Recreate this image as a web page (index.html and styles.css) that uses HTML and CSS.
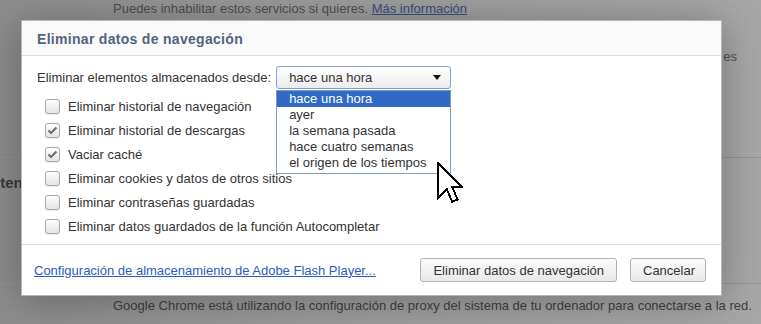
FILE: index.html
```html
<!DOCTYPE html>
<html lang="es">
<head>
  <meta charset="UTF-8" />
  <meta name="viewport" content="width=device-width, initial-scale=1.0" />
  <title>Eliminar datos de navegación</title>
  <link rel="stylesheet" href="styles.css">
</head>
<body>
  <div class="page">
    <p class="page-note">Puedes inhabilitar estos servicios si quieres. <a href="#">Más información</a></p>
    <p class="page-tail">es</p>
    <section class="page-section">
      <h3 class="page-heading">Contenido web</h3>
    </section>
    <section class="page-section page-section-last">
      <p class="page-proxy">Google Chrome está utilizando la configuración de proxy del sistema de tu ordenador para conectarse a la red.</p>
    </section>
  </div>

  <div class="dialog">
    <div class="dialog-header">
      <h2>Eliminar datos de navegación</h2>
    </div>

    <div class="dialog-body">
      <div class="since-row">
        <span class="since-label">Eliminar elementos almacenados desde:</span>
        <div class="select-wrap">
          <div class="select">
            <span>hace una hora</span>
            <span class="select-arrow"></span>
          </div>
          <ul class="listbox">
            <li class="selected">hace una hora</li>
            <li>ayer</li>
            <li>la semana pasada</li>
            <li>hace cuatro semanas</li>
            <li>el origen de los tiempos</li>
          </ul>
          <svg class="cursor" width="26" height="43" viewBox="0 0 12 20" shape-rendering="crispEdges">
            <path d="M0.5 0.5 V16.5 L4.5 12.5 L7 18.5 L9.5 17.5 L7 11.5 H11.5 Z" fill="#fff" stroke="#000" stroke-width="0.9" stroke-linejoin="miter"/>
          </svg>
        </div>
      </div>

      <div class="options">
        <label class="option"><span class="box"></span>Eliminar historial de navegación</label>
        <label class="option"><span class="box checked"><svg width="11" height="9" viewBox="0 0 11 9"><path d="M1.5 4.5 L4 7 L9.5 1.5" fill="none" stroke="#707070" stroke-width="2.2"/></svg></span>Eliminar historial de descargas</label>
        <label class="option"><span class="box checked"><svg width="11" height="9" viewBox="0 0 11 9"><path d="M1.5 4.5 L4 7 L9.5 1.5" fill="none" stroke="#707070" stroke-width="2.2"/></svg></span>Vaciar caché</label>
        <label class="option"><span class="box"></span>Eliminar cookies y datos de otros sitios</label>
        <label class="option"><span class="box"></span>Eliminar contraseñas guardadas</label>
        <label class="option"><span class="box"></span>Eliminar datos guardados de la función Autocompletar</label>
      </div>
    </div>

    <div class="dialog-footer">
      <a href="#" class="flash-link">Configuración de almacenamiento de Adobe Flash Player...</a>
      <div class="buttons">
        <button type="button">Eliminar datos de navegación</button>
        <button type="button">Cancelar</button>
      </div>
    </div>
  </div>
</body>
</html>
```

FILE: styles.css
```css
body {
  margin: 0;
  width: 761px;
  height: 324px;
  overflow: hidden;
  font-family: 'Liberation Sans', Arial, sans-serif;
  font-size: 13px;
  color: #333;
  background: linear-gradient(90deg, #8c8c8c 0%, #9c9c9c 40%, #a7a7a7 100%);
  position: relative;
}

.page {
  height: 324px;
}

.page-note {
  margin: 0;
  padding: 1px 0 0 113px;
  line-height: 16px;
  color: #4e4e4e;
}

.page-note a {
  color: #3b4d7a;
}

.page-tail {
  margin: 0;
  padding: 32px 24px 9px 0;
  text-align: right;
  line-height: 16px;
  color: #4e4e4e;
}

.page-section {
  border-top: 1px solid #929292;
  margin-top: 83px;
  height: 125px;
}

.page-heading {
  margin: 16px 0 0 -29px;
  font-size: 15px;
  line-height: 18px;
  color: #3a3a3a;
}

.page-section-last {
  margin-top: 0;
  height: auto;
}

.page-proxy {
  margin: 0;
  padding: 14px 0 0 113px;
  line-height: 16px;
  color: #3f3f3f;
}

/* dialogo */

.dialog {
  position: absolute;
  left: 21px;
  top: 20px;
  width: 699px;
  height: 274px;
  background-color: white;
  border: 1px solid #b4b8c6;
  box-shadow: 0 4px 40px rgba(0, 0, 0, 0.3);
}

.dialog-header {
  box-sizing: border-box;
  height: 35px;
  padding: 2px 15px 0;
  background-color: #fafafa;
  border-bottom: 1px solid #dcdcdc;
  display: flex;
  align-items: center;
}

.dialog-header h2 {
  margin: 0;
  font-size: 14px;
  font-weight: bold;
  letter-spacing: 0.3px;
  color: #53637d;
}

.dialog-body {
  padding: 10px 15px 0;
  height: 178px;
  border-bottom: 1px solid #dcdcdc;
}

.since-row {
  display: flex;
  align-items: center;
  height: 23px;
}

.since-label {
  margin-right: 5px;
}

.select-wrap {
  position: relative;
}

.select {
  box-sizing: border-box;
  width: 175px;
  height: 23px;
  padding: 0 9px 0 12px;
  border: 1px solid #7ea4e7;
  border-radius: 3px;
  background: linear-gradient(#ffffff, #ececec);
  display: flex;
  align-items: center;
  justify-content: space-between;
}

.select-arrow {
  width: 0;
  height: 0;
  border-left: 4px solid transparent;
  border-right: 4px solid transparent;
  border-top: 5px solid #111;
}

.listbox {
  position: absolute;
  top: 24px;
  left: 0;
  width: 173px;
  margin: 0;
  padding: 0 0 2px;
  list-style: none;
  background-color: white;
  border: 1px solid #7f9db9;
  z-index: 2;
}

.listbox li {
  height: 16px;
  line-height: 16px;
  padding-left: 12px;
}

.listbox li.selected {
  background-color: #316ac5;
  color: white;
}

.cursor {
  position: absolute;
  left: 161px;
  top: 96px;
  z-index: 3;
}

.options {
  display: flex;
  flex-direction: column;
  padding: 5px 0 0 8px;
}

.option {
  display: flex;
  align-items: center;
  height: 24px;
}

.box {
  width: 13px;
  height: 13px;
  border: 1px solid #a8a8a8;
  border-radius: 3px;
  background: linear-gradient(#ffffff, #e3e3e3);
  box-shadow: 0 1px 1px rgba(0, 0, 0, 0.08);
  margin-right: 8px;
  display: flex;
  align-items: center;
  justify-content: center;
}

.dialog-footer {
  display: flex;
  align-items: center;
  justify-content: space-between;
  padding: 0 15px 0 12px;
  height: 50px;
}

.flash-link {
  color: #2a5dc1;
}

.buttons {
  display: flex;
  gap: 13px;
}

button {
  font-family: inherit;
  font-size: 13px;
  color: #333;
  height: 24px;
  padding: 0 12px;
  border: 1px solid #b2b2b2;
  border-radius: 3px;
  background: linear-gradient(#fbfbfb, #e9e9e9);
}

button:last-child {
  width: 76px;
}
```
